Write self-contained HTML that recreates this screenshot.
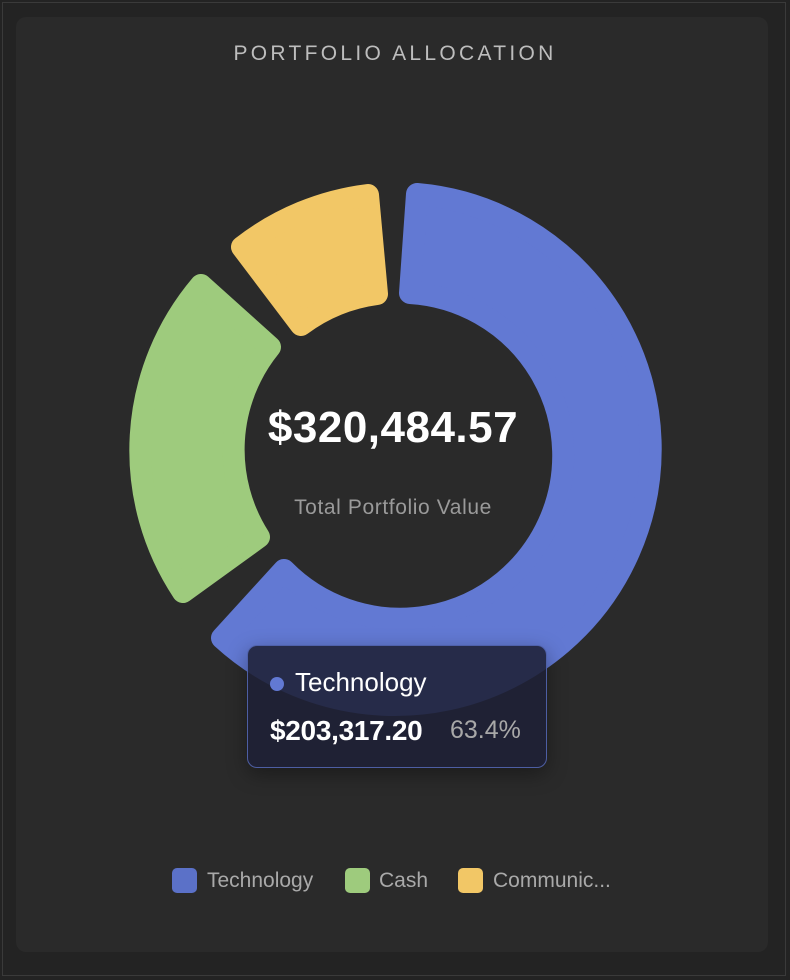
<!DOCTYPE html>
<html><head><meta charset="utf-8"><style>
html,body{margin:0;padding:0;}
body{width:790px;height:980px;background:#232323;position:relative;overflow:hidden;font-family:"Liberation Sans",sans-serif;}
.frame{position:absolute;left:2px;top:2px;width:784px;height:974px;border:1px solid #3a3a3a;box-sizing:border-box;}
.card{position:absolute;left:16px;top:17px;width:752px;height:935px;background:#2a2a2a;border-radius:10px;}
.title{position:absolute;left:0;width:790px;top:42px;text-align:center;color:#bdbdbd;font-size:21px;letter-spacing:3.3px;}
svg{position:absolute;left:0;top:0;}
.val{position:absolute;left:0;width:786px;top:403px;text-align:center;color:#fff;font-weight:bold;font-size:44px;letter-spacing:0.5px;}
.sub{position:absolute;left:0;width:786px;top:496px;text-align:center;color:#9a9a9a;font-size:21px;letter-spacing:0.6px;}
.tip{position:absolute;left:247px;top:645px;width:300px;height:123px;box-sizing:border-box;background:rgba(30,32,54,0.88);border:1px solid rgba(98,121,211,0.7);border-radius:10px;box-shadow:0 6px 20px rgba(0,0,0,0.35);}
.tip .dot{position:absolute;left:22px;top:31px;width:14px;height:14px;border-radius:50%;background:#6279d3;}
.tip .name{position:absolute;left:47px;top:21px;color:#fff;font-size:26px;}
.tip .amt{position:absolute;left:22px;top:69px;color:#fff;font-size:28px;font-weight:bold;letter-spacing:-0.3px;}
.tip .pct{position:absolute;left:202px;top:70px;color:#a8a8a8;font-size:25px;}
.sq{position:absolute;top:868px;width:25px;height:25px;border-radius:5px;}
.lt{position:absolute;top:869px;color:#a9a9a9;font-size:21px;}
</style></head><body>
<div class="frame"></div>
<div class="card"></div>
<div class="title">PORTFOLIO ALLOCATION</div>
<svg width="790" height="980">
<g stroke-linejoin="round" stroke-width="22">
<path d="M417 194 A256 256 0 1 1 222 638 L284 570 A163 163 0 1 0 410 293 Z" fill="#6279d3" stroke="#6279d3"/>
<path d="M183 592 A256 256 0 0 1 201 285 L270 347 A163 163 0 0 0 259 537 Z" fill="#9ecb7d" stroke="#9ecb7d"/>
<path d="M242 247 A256 256 0 0 1 368 195 L377 294 A163 163 0 0 0 301 325 Z" fill="#f2c766" stroke="#f2c766"/>
</g>
</svg>
<div class="val">$320,484.57</div>
<div class="sub">Total Portfolio Value</div>
<div class="tip"><div class="dot"></div><div class="name">Technology</div><div class="amt">$203,317.20</div><div class="pct">63.4%</div></div>
<div class="sq" style="left:172px;background:#5b71c8"></div><div class="lt" style="left:207px">Technology</div>
<div class="sq" style="left:345px;background:#9ecb7d"></div><div class="lt" style="left:379px">Cash</div>
<div class="sq" style="left:458px;background:#f2c766"></div><div class="lt" style="left:493px">Communic...</div>
</body></html>
